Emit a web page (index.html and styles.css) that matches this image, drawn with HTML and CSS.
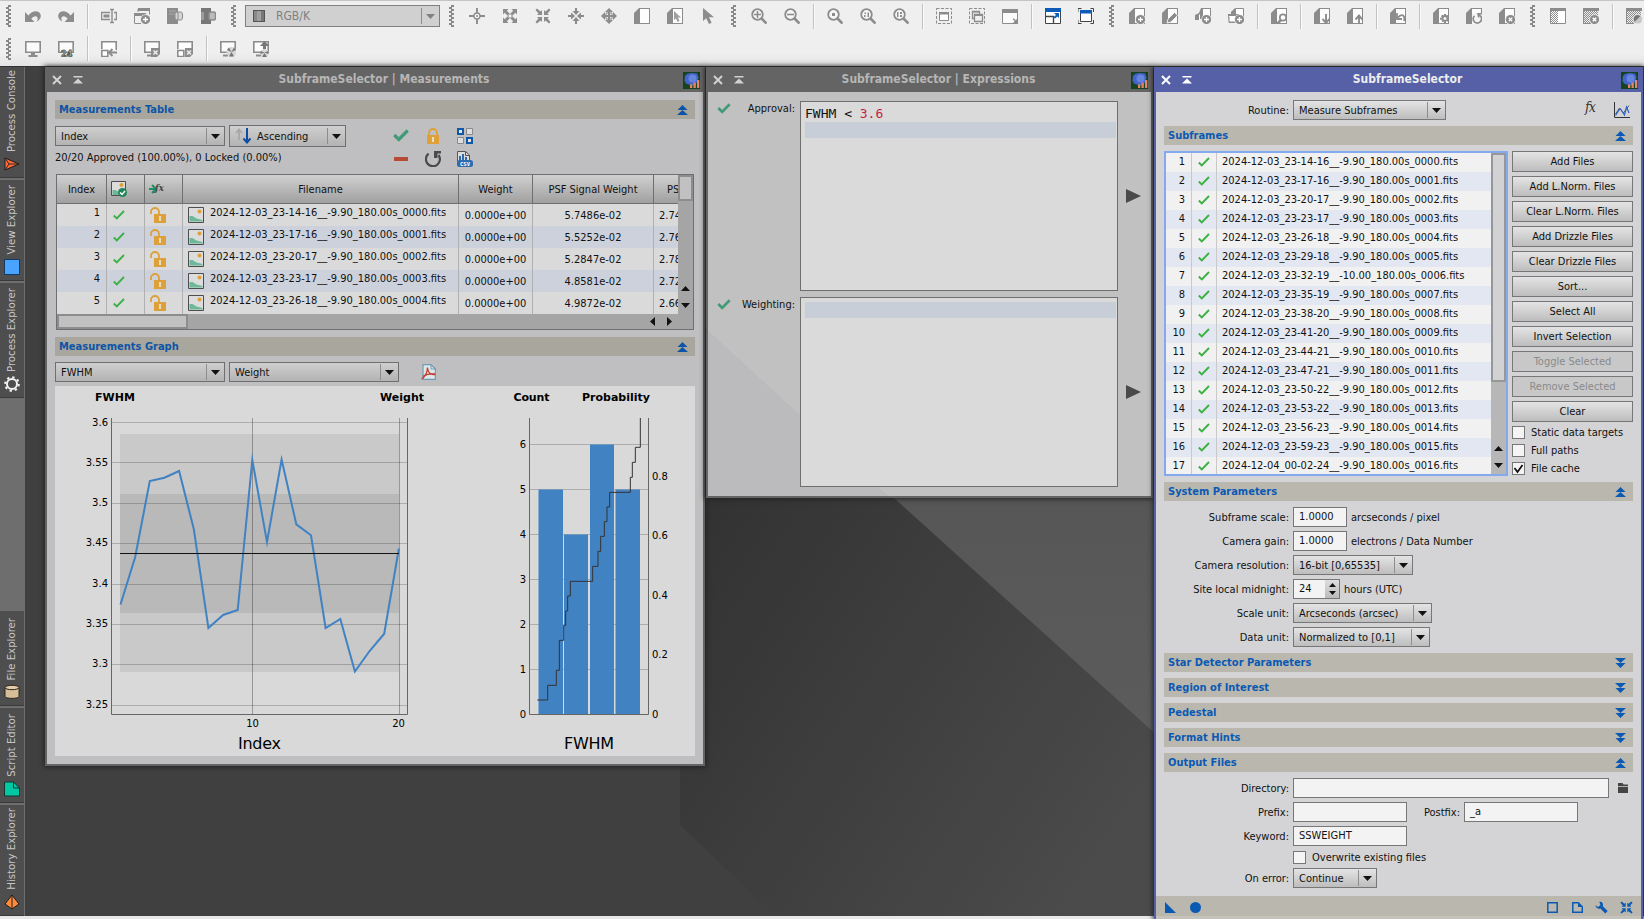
FILE: index.html
```html
<!DOCTYPE html>
<html lang="en">
<head>
    <meta charset="UTF-8">
    <title>SubframeSelector</title>
    <link rel="stylesheet" href="styles.css">
</head>
<body>
    <!-- Icon set -->
    <svg class="sprite" width="0" height="0">
        <defs>
            <pattern id="dots" width="2" height="2" patternUnits="userSpaceOnUse"><path d="M0 0h1v1H0zM1 1h1v1H1z" fill="#8c8c8c"/></pattern>
            <g id="doc"><path d="M6 .5h9.5v15H6z" fill="#fdfdfd"/><path d="M5 0h11v16H0V5zM6 1v14h9V1z" fill-rule="evenodd" fill="currentColor"/></g>
            <g id="badge"><circle cx="11.5" cy="11.5" r="5.3" fill="#efefef"/><circle cx="11.5" cy="11.5" r="4.6" fill="currentColor"/></g>
            <g id="lens"><circle cx="6.5" cy="6.5" r="5.3" fill="#f6f6f6" stroke="currentColor" stroke-width="1.8"/><path d="M10.5 10.5l5 5" stroke="currentColor" stroke-width="2.6"/></g>
            <g id="screen"><path d="M.8.8h14.4v10.4H.8z" fill="#fbfbfb" stroke="currentColor" stroke-width="1.6"/></g>
        </defs>
        <symbol id="undo" viewBox="0 0 16 16"><path d="M0 4v10h9.500l-3.200-3.200C8 8.500 11 7.500 12.300 9.300c.9 1.400.2 3-1.300 4.500C15 12.500 16.500 9 15.500 6.500 14 2.500 8 1.800 3.400 7.500z" fill="currentColor"/></symbol>
        <symbol id="redo" viewBox="0 0 16 16"><path d="M16 4v10H6.500l3.200-3.200C8 8.500 5 7.500 3.700 9.300c-.9 1.400-.2 3 1.300 4.500C1 12.500-.5 9 .5 6.500 2 2.500 8 1.800 12.600 7.500z" fill="currentColor"/></symbol>
        <symbol id="rename" viewBox="0 0 16 16"><path d="M9 4.500H.5v7H9M13 4.500h2.500v7H13M9 1.500h4M9 14.500h4M11 2v12" fill="none" stroke="currentColor" stroke-width="1.400"/><path d="M2.500 6.500h6v3h-6z" fill="currentColor"/></symbol>
        <symbol id="newwin" viewBox="0 0 16 16"><path d="M4.500 1.500h11v5M4 4V1M.5 15V6h11v2M.5 15.500H7" fill="none" stroke="currentColor"/><path d="M4 0h12v3H4zM0 5h12v3H0z" fill="currentColor"/><use href="#badge"/><path d="M11.500 9v5M9 11.500h5" stroke="#fff" stroke-width="1.300"/></symbol>
        <symbol id="cont1" viewBox="0 0 16 16"><rect width="11" height="16" fill="currentColor"/><path d="M2 3h7M2 6h6" stroke="#a9a9a9"/><rect x="8" y="4" width="7.500" height="8" rx="2" fill="#d5d5d5" stroke="currentColor"/><path d="M11 4v8" stroke="currentColor"/></symbol>
        <symbol id="cont2" viewBox="0 0 16 16"><rect x="1" width="10" height="16" fill="#777"/><path d="M1 4h3v8H1z" fill="#9b9b9b"/><rect x="9" y="4" width="6.500" height="8" rx="2" fill="#bbb" stroke="currentColor" stroke-width="1.500"/></symbol>
        <symbol id="center" viewBox="0 0 16 16"><path d="M8 0v5M8 11v5M0 8h5M11 8h5" fill="none" stroke="currentColor" stroke-width="1.900"/><circle cx="8" cy="8" r="3" fill="#f5f5f5" stroke="currentColor" stroke-width="1.300"/><path d="M8 7v2M7 8h2" stroke="currentColor"/></symbol>
        <symbol id="expand" viewBox="0 0 16 16"><path d="M1 1h5.500L4.800 2.700l3.200 3.300 3.200-3.300L9.500 1H15v5.500l-1.700-1.700L10 8l3.300 3.200L15 9.500V15H9.500l1.700-1.700L8 10l-3.200 3.300L6.500 15H1V9.500l1.700 1.700L6 8 2.700 4.800 1 6.500z" fill="currentColor"/><path d="M6.500 6.500h3v3h-3z" fill="#efefef"/></symbol>
        <symbol id="shrink" viewBox="0 0 16 16"><path d="M7 7H2l1.500-1.500L.5 2 2 .5l3.500 3L7 2zM9 7V2l1.500 1.500L14 .5 15.500 2l-3 3.500L14 7zM7 9v5l-1.500-1.500-3.500 3L.5 14l3-3.500L2 9zM9 9h5l-1.500 1.500 3 3.500-1.500 1.500-3.500-3L9 14z" fill="currentColor"/></symbol>
        <symbol id="inward" viewBox="0 0 16 16"><path d="M8 7L4.500 3H7V0h2v3h2.500zM8 9l3.500 4H9v3H7v-3H4.500zM7 8l-4 3.500V9H0V7h3V4.500zM9 8l4-3.500V7h3v2h-3v2.500z" fill="currentColor"/></symbol>
        <symbol id="pan" viewBox="0 0 16 16"><path d="M8 0l4 4H9v3h3V4l4 4-4 4V9H9v3h3l-4 4-4-4h3V9H4v3L0 8l4-4v3h3V4H4z" fill="currentColor"/><path d="M5 5h6v6H5z" fill="none" stroke="currentColor"/></symbol>
        <symbol id="page" viewBox="0 0 16 16"><use href="#doc"/></symbol>
        <symbol id="pagecursor" viewBox="0 0 16 16"><use href="#doc"/><path d="M7 3v9l2-1.500 1.500 3.500 2-1L11 9.500h3z" fill="#a0a0a0"/></symbol>
        <symbol id="cursor" viewBox="0 0 16 16"><path d="M3 0v13l3.200-2.700L9 16l2.600-1.300L9 9.300h5z" fill="currentColor"/></symbol>
        <symbol id="zoomin" viewBox="0 0 16 16"><use href="#lens"/><path d="M3 6.500h7M6.500 3v7" stroke="currentColor" stroke-width="1.600"/></symbol>
        <symbol id="zoomout" viewBox="0 0 16 16"><use href="#lens"/><path d="M3 6.500h7" stroke="currentColor" stroke-width="1.600"/></symbol>
        <symbol id="zoom1" viewBox="0 0 16 16"><use href="#lens"/><path d="M5 5h3v3H5z" fill="currentColor"/></symbol>
        <symbol id="zoom2" viewBox="0 0 16 16"><use href="#lens"/><path d="M4 7h1.500v2H4zM7.500 4.500H9V9H7.500zM4.500 4.500H6V6H4.500z" fill="currentColor"/></symbol>
        <symbol id="zoom3" viewBox="0 0 16 16"><use href="#lens"/><path d="M4 4h1.500v5H4zM7 4h2v2H7zM7 7h2v2H7z" fill="currentColor"/></symbol>
        <symbol id="fit1" viewBox="0 0 16 16"><path d="M.5.5h15v15H.5z" fill="none" stroke="currentColor" stroke-dasharray="3 1.500"/><path d="M3.500 4.500h9v8h-9z" fill="#fff" stroke="currentColor"/><path d="M3 4h10v2.500H3z" fill="currentColor"/></symbol>
        <symbol id="fit2" viewBox="0 0 16 16"><path d="M.5.5h15v15H.5z" fill="none" stroke="currentColor" stroke-dasharray="3 1.500"/><path d="M3 3.500h7.500V6M3.500 3v7.500H6M5.500 6.500h8v7h-8z" fill="none" stroke="currentColor" stroke-width="1.300"/><path d="M3 3h8v1.500H3zM5 6h9v2H5z" fill="currentColor"/></symbol>
        <symbol id="fit3" viewBox="0 0 16 16"><path d="M.5 1.500h15v14H.5z" fill="#fbfbfb" stroke="currentColor"/><path d="M0 1h16v4H0zM16 16v-6l-2.300 2.300-2-2-1 1 2 2L10 16z" fill="currentColor"/></symbol>
        <symbol id="winmax" viewBox="0 0 16 16"><path d="M.5.5h15v15H.5z" fill="#fff" stroke="#444"/><path d="M1 8.500h7.500V15" fill="none" stroke="#444" stroke-width="1.400"/><path d="M0 0h16v4H0zM14 5v5l-1.600-1.600L10 10.600 8.600 9.200 11 7 9 5z" fill="#0e5bb8"/></symbol>
        <symbol id="winfull" viewBox="0 0 16 16"><path d="M0 4V.5h3.500M12.500.5h3V4M0 12v3.500h3.500M12.500 15.500h3V12" fill="none" stroke="#444"/><path d="M2.500 2.500h11v11h-11z" fill="#fff" stroke="#444"/><path d="M2 2h12v3.500H2z" fill="#0e5bb8"/></symbol>
        <symbol id="docadd" viewBox="0 0 16 16"><use href="#doc"/><use href="#badge"/><path d="M11.500 9v5M9 11.500h5" stroke="#fff" stroke-width="1.300"/></symbol>
        <symbol id="docedit" viewBox="0 0 16 16"><use href="#doc"/><path d="M5 15l1-4 6.500-6.500 3 3L9 14z" fill="currentColor" stroke="#efefef"/></symbol>
        <symbol id="docadd2" viewBox="0 0 16 16"><path d="M6 0h10v11H4v1H0V7l4-2z" fill="currentColor"/><path d="M8 1h7v9H8zM4 7l1-1v6H4z" fill="#fff"/><use href="#badge"/><path d="M11.500 9v5M9 11.500h5" stroke="#fff" stroke-width="1.300"/></symbol>
        <symbol id="docadd3" viewBox="0 0 16 16"><path d="M7.500.5h8v9h-8z" fill="#fff" stroke="currentColor"/><path d="M7 0v6h4v2H0V6h3V4zM.5 8v6.500H8" fill="currentColor"/><path d="M1.500 8h6v5.500h-6z" fill="#fff"/><path d="M0 7h1v8h8v-1H1z" fill="currentColor"/><use href="#badge"/><path d="M11.500 9v5M9 11.500h5" stroke="#fff" stroke-width="1.300"/></symbol>
        <symbol id="docfind" viewBox="0 0 16 16"><use href="#doc"/><path d="M6 16l4-4" stroke="currentColor" stroke-width="2.500"/><circle cx="12" cy="9.500" r="3.200" fill="#fff" stroke="currentColor" stroke-width="1.700"/></symbol>
        <symbol id="docdown" viewBox="0 0 16 16"><use href="#doc"/><path d="M12 6v8M8.500 11l3.500 4 3.500-4" fill="none" stroke="currentColor" stroke-width="1.900"/></symbol>
        <symbol id="docup" viewBox="0 0 16 16"><use href="#doc"/><path d="M12 16V8M8.500 11.500L12 7.500l3.500 4" fill="none" stroke="currentColor" stroke-width="1.900"/></symbol>
        <symbol id="docundo" viewBox="0 0 16 16"><use href="#doc"/><path d="M7 5v6h5M7.500 10c4-5 8-3 6.500 3" fill="none" stroke="currentColor" stroke-width="1.800"/></symbol>
        <symbol id="docgear" viewBox="0 0 16 16"><use href="#doc"/><path d="M11 6h2v1.500l1.200-.8 1.300 1.300-.8 1.200H16v2h-1.300l.8 1.300-1.300 1.300-1.200-.8V15h-2v-1.500l-1.200.8-1.300-1.300.8-1.300H7v-2h1.800L8 8l1.300-1.300 1.700.8z" fill="currentColor"/><circle cx="12" cy="10.500" r="1.500" fill="#f5f5f5"/></symbol>
        <symbol id="docreload" viewBox="0 0 16 16"><use href="#doc"/><path d="M6 5h10v11H6z" fill="#f5f5f5"/><path d="M8.500 7.800a4.200 4.200 0 1 0 4.500-.8" fill="none" stroke="currentColor" stroke-width="1.700"/><path d="M11 5h5v1.500h-2.500v3H12z" fill="currentColor"/></symbol>
        <symbol id="docdel" viewBox="0 0 16 16"><use href="#doc"/><use href="#badge"/><path d="M9.800 9.800l3.400 3.400M13.200 9.800l-3.400 3.400" stroke="#fff" stroke-width="1.300"/></symbol>
        <symbol id="mask" viewBox="0 0 16 16"><path d="M0 .5h16v15H0z" fill="#fff"/><path d="M1 2h7v13H1z" fill="url(#dots)"/><path d="M.5.500h15v15H.5z" fill="none" stroke="currentColor"/><path d="M0 0h16v3H0z" fill="currentColor"/></symbol>
        <symbol id="maskdel" viewBox="0 0 16 16"><path d="M1 2h14v13H1z" fill="url(#dots)"/><path d="M0 0h16v3H0zM0 0h1v16H0zM0 15h8v1H0z" fill="currentColor"/><use href="#badge"/><path d="M9.800 9.800l3.400 3.400M13.200 9.800l-3.400 3.400" stroke="#fff" stroke-width="1.500"/></symbol>
        <symbol id="maskinv" viewBox="0 0 16 16"><path d="M1 2h14v13H1z" fill="url(#dots)"/><path d="M0 0h16v3H0zM0 0h1v16H0zM0 15h8v1H0z" fill="currentColor"/><circle cx="11.500" cy="11" r="4.500" fill="#777" stroke="#efefef"/><path d="M8.500 14l6-6a4 4 0 0 1-6 6z" fill="#c9c9c9"/></symbol>
        <symbol id="mon" viewBox="0 0 16 16"><use href="#screen"/><path d="M6 12h4v2h2.500v2h-9v-2H6z" fill="currentColor"/></symbol>
        <symbol id="mon24" viewBox="0 0 16 16"><use href="#screen"/><text x="3" y="15.500" class="tiny24">24</text></symbol>
        <symbol id="monleft" viewBox="0 0 16 16"><path d="M.8 8V.8h14.400V9M.8 9.500h6v6h-6z" fill="#fff" stroke="currentColor" stroke-width="1.600"/><path d="M16 11.500H9M11.500 8L8 11.500l3.500 3.500" fill="none" stroke="currentColor" stroke-width="1.900"/></symbol>
        <symbol id="mondel" viewBox="0 0 16 16"><use href="#screen"/><path d="M3 13.500h5v2H3z" fill="currentColor"/><path d="M7 7h9v6l-3 3H7z" fill="currentColor"/><path d="M9.500 9.500l4 4M13.500 9.500l-4 4" stroke="#efefef" stroke-width="1.500"/></symbol>
        <symbol id="mondel2" viewBox="0 0 16 16"><path d="M.8 8V.8h14.400V9M.8 9.500h6v6h-6z" fill="#fff" stroke="currentColor" stroke-width="1.600"/><path d="M8 7h8v6l-3 3H8z" fill="currentColor"/><path d="M10 9.500l4 4M14 9.500l-4 4" stroke="#efefef" stroke-width="1.500"/></symbol>
        <symbol id="monrad" viewBox="0 0 16 16"><use href="#screen"/><path d="M3 13.500h5v2H3z" fill="currentColor"/><circle cx="11.500" cy="11" r="5" fill="#d8d8d8"/><path d="M11.500 11L7 9l2-2.500zM11.500 11L16 9l-2-2.500zM11.500 11L9 15.500h5z" fill="#777"/></symbol>
        <symbol id="monup" viewBox="0 0 16 16"><use href="#screen"/><path d="M3 13.500h5v2H3z" fill="currentColor"/><circle cx="11.500" cy="12" r="4" fill="#d8d8d8"/><path d="M11.500 11.500L7.500 10v3zM11.500 11.500l4-1.500v3zM11.500 12L9 16h5z" fill="#777"/><path d="M11.500 0L16 5h-3v3h-3V5H7z" fill="#777"/></symbol>

        <symbol id="down" viewBox="0 0 9 5"><path d="M0 0h9L4.500 5z" fill="currentColor"/></symbol>
        <symbol id="chevup" viewBox="0 0 11 10"><path d="M5.500 0L10.500 5H.5zM5.500 5L11 10H0z" fill="currentColor"/></symbol>
        <symbol id="chevdown" viewBox="0 0 11 10"><path d="M0 0h11L5.500 5zM.5 5h10L5.500 10z" fill="currentColor"/></symbol>
        <symbol id="close" viewBox="0 0 10 10"><path d="M1 1l8 8M9 1L1 9" stroke="currentColor" stroke-width="2"/></symbol>
        <symbol id="shade" viewBox="0 0 10 8"><path d="M.5 0h9v1.500h-9zM5 2.500L10 7.500H0z" fill="currentColor"/></symbol>
        <symbol id="app" viewBox="0 0 17 17"><path d="M0 0h17v17H0z" fill="#17421f"/><path d="M2 4l2-2 4-1 6 .500 1.500 3.500-1 5-3.500 3.500-4-.5-4-1.500-1.500-3z" fill="#4464cc"/><circle cx="9.500" cy="6.500" r="4" fill="#6385dc"/><path d="M7 12.500h2.300V16H7zM10.500 10.500h2.300V16h-2.300zM14 8h2.300v8H14z" fill="#e2876a"/></symbol>
        <symbol id="tick" viewBox="0 0 12 10"><path d="M.8 5.500l3 3L11 1" fill="none" stroke="#3cb043" stroke-width="1.900"/></symbol>
        <symbol id="bigtick" viewBox="0 0 16 13"><path d="M1.300 6l4.500 4.500L14.700 1.500" fill="none" stroke="#429a77" stroke-width="3.200"/></symbol>
        <symbol id="lock" viewBox="0 0 12 16"><path d="M2 7V5a4 4 0 0 1 8 0v2" fill="none" stroke="#dea038" stroke-width="1.800"/><path d="M0 7h12v9H0z" fill="#dea038"/><path d="M5 9h2v5H5z" fill="#e8dcc4"/></symbol>
        <symbol id="unlock" viewBox="0 0 16 16"><path d="M1 7V5a4 4 0 0 1 8 0v2" fill="none" stroke="#dea038" stroke-width="1.800"/><path d="M4 7h12v9H4z" fill="#dea038"/><path d="M9 9h2v5H9z" fill="#e8dcc4"/></symbol>
        <symbol id="grid" viewBox="0 0 16 16"><path d="M1 1h5v5H1zM10 10h5v5h-5z" fill="#e4e4e4" stroke="#1159a8" stroke-width="2"/><path d="M9.500.5h6v6h-6zM.5 9.500h6v6h-6z" fill="#ddd" stroke="#8a8a8a"/></symbol>
        <symbol id="reload" viewBox="0 0 16 16"><path d="M3.600 2.700A7 7 0 1 0 13.500 4" fill="none" stroke="#4a4a4a" stroke-width="2.200"/><path d="M9 0h7v2.500h-3.500V7H9z" fill="#4a4a4a"/></symbol>
        <symbol id="csv" viewBox="0 0 16 16"><path d="M.5 10V.5h8L12.500 4v5" fill="#dcdcdc" stroke="#555"/><path d="M2 5h2v4H2zM5 3h2v6H5zM8 6h2v3H8z" fill="#2f6cae"/><path d="M8.500.5v4h4" fill="none" stroke="#555"/><rect y="9" width="16" height="7" rx="2.500" fill="#2f6cae"/><text x="8" y="14.600" class="tinycsv">CSV</text></symbol>
        <symbol id="pdf" viewBox="0 0 16 16"><path d="M2 .6h8L14.400 5v10.400H2z" fill="#dfe6ea" stroke="#6e9cb3" stroke-width="1.200"/><path d="M10 .600V5h4.400" fill="none" stroke="#6e9cb3"/><path d="M.5 15C4 13 6.500 8 6.500 3.500M6.500 4c.5 4 3 7 7.500 6.500M2 12.500c3-2.500 7-3 12-2.500" fill="none" stroke="#c0392b" stroke-width="1.300"/></symbol>
        <symbol id="image" viewBox="0 0 16 16"><path d="M.5.5h15v15H.5z" fill="#dcdcdc" stroke="#4d4d4d"/><path d="M1.500 9h3l4 2.500 6 1.500v1.500h-13z" fill="#6cb899"/><circle cx="11.500" cy="4.500" r="2" fill="#dea038"/></symbol>
        <symbol id="imageok" viewBox="0 0 16 16"><path d="M.5.500h14v14H.5z" fill="#dcdcdc" stroke="#4d4d4d"/><path d="M1.500 9h3l3 2v3h-6z" fill="#6cb899"/><circle cx="10.500" cy="4" r="2" fill="#dea038"/><circle cx="11.500" cy="11.500" r="4.500" fill="#1f8757"/><path d="M9 11.500l2 2 3-3.500" fill="none" stroke="#fff" stroke-width="1.500"/></symbol>
        <symbol id="arrowfx" viewBox="0 0 16 16"><path d="M0 8h6M3 4l4 4-4 4" fill="none" stroke="#1f9066" stroke-width="2"/><text x="6" y="10" class="tinyfx">&#402;x</text></symbol>
        <symbol id="graph" viewBox="0 0 16 16"><path d="M.5 0v15.500H16" fill="none" stroke="#333"/><path d="M1.500 12l4-6 4 5 5.500-7.500" fill="none" stroke="#555"/><path d="M1.500 13.500L5 8l1.500-1 4 6 2-8 2.500 6" fill="none" stroke="#2d63c8" stroke-width="1.200"/></symbol>
        <symbol id="play" viewBox="0 0 15 14"><path d="M0 0l15 7L0 14z" fill="#4a4a4a"/></symbol>
        <symbol id="updown" viewBox="0 0 16 16"><path d="M4 12V3M1 5l3-3.500L7 5" fill="none" stroke="#a8a8a8" stroke-width="1.800"/><path d="M12 0v13M8.500 10.500L12 14.500l3.500-4" fill="none" stroke="#0c4ea2" stroke-width="2"/></symbol>
        <symbol id="folder" viewBox="0 0 10 10"><path d="M0 0h4.500l1 1.500H10V3H0zM0 3.700h10V10H0z" fill="#444"/></symbol>
        <symbol id="console" viewBox="0 0 16 16"><path d="M1 2l14 6L1 14z" fill="#ff6a3a" stroke="#1e1e1e"/><path d="M1 2l4 6-4 6M5 8h10" fill="none" stroke="#1e1e1e" stroke-width=".9"/></symbol>
        <symbol id="view" viewBox="0 0 16 16"><path d="M.5.5h15v15H.5z" fill="#4aa3ff" stroke="#123a63"/></symbol>
        <symbol id="gear" viewBox="0 0 16 16"><circle cx="8" cy="8" r="5" fill="none" stroke="#f2f2f2" stroke-width="2"/><circle cx="8" cy="8" r="6.800" fill="none" stroke="#f2f2f2" stroke-width="2" stroke-dasharray="2.400 2.940"/></symbol>
        <symbol id="disk" viewBox="0 0 16 16"><path d="M1 3.500v9c0 2.500 14 2.500 14 0v-9" fill="#d6bf98" stroke="#2b2620"/><ellipse cx="8" cy="3.500" rx="7" ry="2.200" fill="#e3cda8" stroke="#2b2620"/></symbol>
        <symbol id="script" viewBox="0 0 16 16"><path d="M.5 1h9L15.500 7v8H.5z" fill="#00c8a5" stroke="#12352e"/><path d="M9.500 1v6h6" fill="none" stroke="#12352e"/></symbol>
        <symbol id="history" viewBox="0 0 16 16"><path d="M8 1l7 9-7 5-7-5z" fill="#ff8a3c" stroke="#1e1e1e"/><path d="M8 1v14" stroke="#1e1e1e"/></symbol>
        <symbol id="tri" viewBox="0 0 11 11"><path d="M0 0l11 11H0z" fill="currentColor"/></symbol>
        <symbol id="dot" viewBox="0 0 11 11"><circle cx="5.500" cy="5.500" r="5.500" fill="currentColor"/></symbol>
        <symbol id="square" viewBox="0 0 11 11"><path d="M.8.800h9.400v9.400H.8z" fill="none" stroke="currentColor" stroke-width="1.500"/></symbol>
        <symbol id="sheet" viewBox="0 0 11 11"><path d="M.8.800h5.500l4 4v5.400H.8z" fill="none" stroke="currentColor" stroke-width="1.500"/><path d="M6 1v4h4z" fill="currentColor"/></symbol>
        <symbol id="wrench" viewBox="0 0 12 12"><path d="M4 .8C6.500.5 8 2.500 7.200 4.800l4.500 4.500-2.200 2.200L5 7C3 7.800.8 6.500.3 4l2.500 1.500L5 3.800z" fill="currentColor"/></symbol>
    </svg>

    <div class="toolbars">
        <div class="toolbar" id="toolbar-main"></div>
        <div class="toolbar" id="toolbar-screen"></div>
    </div>

    <div class="desktop">
        <svg class="wallpaper" width="1644" height="849" viewBox="0 67 1644 849">
            <defs>
                <linearGradient id="wp1" gradientUnits="userSpaceOnUse" x1="700" y1="500" x2="1150" y2="800"><stop offset="0" stop-color="#323232"/><stop offset="1" stop-color="#4b4b4b"/></linearGradient>
                <linearGradient id="wp2" x1="0" y1="0" x2="0" y2="1"><stop offset="0" stop-color="#4c4c4c"/><stop offset="1" stop-color="#5c5c5c"/></linearGradient>
            </defs>
            <rect y="67" width="1644" height="849" fill="#404040"/>
            <path d="M680 67h964v849H776l-96-91z" fill="url(#wp1)"/>
            <path d="M700 323L1160 738V67H700z" fill="url(#wp2)"/>
        </svg>

        <div class="dock">
            <div class="tab t1"><span>Process Console</span><svg class="i16"><use href="#console"/></svg></div>
            <div class="tab t2"><span>View Explorer</span><svg class="i16"><use href="#view"/></svg></div>
            <div class="tab t3"><span>Process Explorer</span><svg class="i16"><use href="#gear"/></svg></div>
            <div class="dock-space"></div>
            <div class="tab t4"><span>File Explorer</span><svg class="i16"><use href="#disk"/></svg></div>
            <div class="tab t5"><span>Script Editor</span><svg class="i16"><use href="#script"/></svg></div>
            <div class="tab t6"><span>History Explorer</span><svg class="i16"><use href="#history"/></svg></div>
        </div>

        <!-- Measurements window -->
        <div class="window measurements">
            <div class="titlebar">
                <svg class="close"><use href="#close"/></svg><svg class="shade"><use href="#shade"/></svg>
                <b>SubframeSelector | Measurements</b><svg class="app"><use href="#app"/></svg>
            </div>
            <div class="content">
                <div class="section"><span>Measurements Table</span><svg class="chev"><use href="#chevup"/></svg></div>
                <div class="table-tools">
                    <div class="sorting">
                        <div class="line">
                            <div class="combo w170"><span>Index</span><i><svg><use href="#down"/></svg></i></div>
                            <div class="combo order"><svg class="i16"><use href="#updown"/></svg><span>Ascending</span><i><svg><use href="#down"/></svg></i></div>
                        </div>
                        <div class="summary">20/20 Approved (100.00%), 0 Locked (0.00%)</div>
                    </div>
                    <div class="actions">
                        <svg class="tick16"><use href="#bigtick"/></svg><svg class="lock16"><use href="#lock"/></svg><svg class="i16"><use href="#grid"/></svg>
                        <em></em><svg class="i16"><use href="#reload"/></svg><svg class="i16"><use href="#csv"/></svg>
                    </div>
                </div>
                <div class="table">
                    <div class="tr head">
                        <div>Index</div><div class="l"><svg class="i16"><use href="#imageok"/></svg></div><div class="l"><svg class="i16"><use href="#arrowfx"/></svg></div>
                        <div>Filename</div><div>Weight</div><div>PSF Signal Weight</div><div class="cut last">PS</div>
                    </div>
                    <div id="measure-rows"></div>
                    <div class="vscroll"><b></b><svg class="up"><use href="#down"/></svg><svg><use href="#down"/></svg></div>
                    <div class="hscroll"><b></b><svg class="left"><use href="#down"/></svg><svg class="right"><use href="#down"/></svg></div>
                </div>
                <div class="section"><span>Measurements Graph</span><svg class="chev"><use href="#chevup"/></svg></div>
                <div class="line graph-tools">
                    <div class="combo w170"><span>FWHM</span><i><svg><use href="#down"/></svg></i></div>
                    <div class="combo w170"><span>Weight</span><i><svg><use href="#down"/></svg></i></div>
                    <svg class="i16"><use href="#pdf"/></svg>
                </div>
                <svg class="chart" width="640" height="370" viewBox="55 386 640 370">
                    <path d="M120 434h279v238H120z" fill="#c9c9c9"/>
                    <path d="M120 494h279v119H120z" fill="#b9b9b9"/>
                    <path d="M112 422.500h296M112 462.500h296M112 503.500h296M112 543.500h296M112 584.500h296M112 624.500h296M112 664.500h296M112 705.500h296" class="gl"/>
                    <path d="M252.500 418v296M399.500 418v296" class="gl dark"/>
                    <path d="M111.500 418v296.500h296V418" class="axis"/>
                    <polyline id="fwhm-line" class="series"/>
                    <path d="M120 553.500h279" stroke="#111"/>
                    <g id="fwhm-labels"></g>
                    <text x="252.500" y="727" class="mid">10</text><text x="398.500" y="727" class="mid">20</text>
                    <text x="259.500" y="748.500" class="name" textLength="43">Index</text>
                    <text x="115" y="401" class="cap" textLength="40">FWHM</text>
                    <text x="402" y="401" class="cap" textLength="44">Weight</text>

                    <path d="M530 444.500h119M530 489.500h119M530 534.500h119M530 579.500h119M530 624.500h119M530 669.500h119" class="gl"/>
                    <path d="M538.500 489.500H563V715h-24.500zM564 534.500h24V715h-24zM590 444.500h24V715h-24zM615.500 489.500H640V715h-24.500z" fill="#4182c3"/>
                    <path d="M529.500 418v296.500h119V418" class="axis"/>
                    <path transform="translate(430 330) scale(.33333)" class="steps" d="M322 1110H353V1066H379V1021H388V931H401V886H407V843H413V798H421V754H488V709H504V664H512V619H523V575H531V531H539V487H601V442H607V397H616V352H631V264"/>
                    <g id="hist-labels"></g>
                    <text x="589" y="748.500" class="name" textLength="50">FWHM</text>
                    <text x="531.500" y="401" class="cap" textLength="36">Count</text>
                    <text x="616" y="401" class="cap" textLength="68">Probability</text>
                </svg>
            </div>
        </div>

        <!-- Expressions window -->
        <div class="window expressions">
            <div class="titlebar">
                <svg class="close"><use href="#close"/></svg><svg class="shade"><use href="#shade"/></svg>
                <b>SubframeSelector | Expressions</b><svg class="app"><use href="#app"/></svg>
            </div>
            <div class="content">
                <div class="expr"><svg class="tick14"><use href="#bigtick"/></svg><label>Approval:</label><div class="code"><p>FWHM &lt; <q>3.6</q></p><p class="cur"></p></div><svg class="play"><use href="#play"/></svg></div>
                <div class="expr"><svg class="tick14"><use href="#bigtick"/></svg><label>Weighting:</label><div class="code"><p class="cur"></p></div><svg class="play"><use href="#play"/></svg></div>
            </div>
        </div>

        <!-- Main process window -->
        <div class="window selector">
            <div class="titlebar">
                <svg class="close"><use href="#close"/></svg><svg class="shade"><use href="#shade"/></svg>
                <b>SubframeSelector</b><svg class="app"><use href="#app"/></svg>
            </div>
            <div class="content">
                <div class="row routine"><label>Routine:</label><div class="combo w153"><span>Measure Subframes</span><i><svg><use href="#down"/></svg></i></div><span class="fx">fx</span><svg class="i16"><use href="#graph"/></svg></div>
                <div class="section"><span>Subframes</span><svg class="chev"><use href="#chevup"/></svg></div>
                <div class="subframes">
                    <div class="list">
                        <div id="subframe-rows"></div>
                        <div class="lscroll"><b></b><svg class="up"><use href="#down"/></svg><svg><use href="#down"/></svg></div>
                    </div>
                    <div class="buttons">
                        <button>Add Files</button>
                        <button>Add L.Norm. Files</button>
                        <button>Clear L.Norm. Files</button>
                        <button>Add Drizzle Files</button>
                        <button>Clear Drizzle Files</button>
                        <button>Sort...</button>
                        <button>Select All</button>
                        <button>Invert Selection</button>
                        <button disabled>Toggle Selected</button>
                        <button disabled>Remove Selected</button>
                        <button>Clear</button>
                        <div class="check"><i></i>Static data targets</div>
                        <div class="check"><i></i>Full paths</div>
                        <div class="check"><i><svg viewBox="0 0 11 11"><path d="M1.500 5l3 4L9.500 2" fill="none" stroke="#111" stroke-width="1.800"/></svg></i>File cache</div>
                    </div>
                </div>
                <div class="section"><span>System Parameters</span><svg class="chev"><use href="#chevup"/></svg></div>
                <div class="form">
                    <div class="row"><label>Subframe scale:</label><div class="edit w54">1.0000</div><span>arcseconds / pixel</span></div>
                    <div class="row"><label>Camera gain:</label><div class="edit w54">1.0000</div><span>electrons / Data Number</span></div>
                    <div class="row"><label>Camera resolution:</label><div class="combo w120"><span>16-bit [0,65535]</span><i><svg><use href="#down"/></svg></i></div></div>
                    <div class="row"><label>Site local midnight:</label><div class="edit spin">24<i><svg class="up"><use href="#down"/></svg><svg><use href="#down"/></svg></i></div><span>hours (UTC)</span></div>
                    <div class="row"><label>Scale unit:</label><div class="combo w139"><span>Arcseconds (arcsec)</span><i><svg><use href="#down"/></svg></i></div></div>
                    <div class="row"><label>Data unit:</label><div class="combo w137"><span>Normalized to [0,1]</span><i><svg><use href="#down"/></svg></i></div></div>
                </div>
                <div class="section"><span>Star Detector Parameters</span><svg class="chev"><use href="#chevdown"/></svg></div>
                <div class="section"><span>Region of Interest</span><svg class="chev"><use href="#chevdown"/></svg></div>
                <div class="section"><span>Pedestal</span><svg class="chev"><use href="#chevdown"/></svg></div>
                <div class="section"><span>Format Hints</span><svg class="chev"><use href="#chevdown"/></svg></div>
                <div class="section"><span>Output Files</span><svg class="chev"><use href="#chevup"/></svg></div>
                <div class="form output">
                    <div class="row"><label>Directory:</label><div class="edit w316"></div><svg class="folder"><use href="#folder"/></svg></div>
                    <div class="row"><label>Prefix:</label><div class="edit w114"></div><label class="postfix">Postfix:</label><div class="edit w114">_a</div></div>
                    <div class="row"><label>Keyword:</label><div class="edit w114">SSWEIGHT</div></div>
                    <div class="row overwrite"><label></label><div class="check"><i></i>Overwrite existing files</div></div>
                    <div class="row"><label>On error:</label><div class="combo w84"><span>Continue</span><i><svg><use href="#down"/></svg></i></div></div>
                </div>
            </div>
            <div class="control">
                <svg><use href="#tri"/></svg><svg><use href="#dot"/></svg><span></span>
                <svg><use href="#square"/></svg><svg><use href="#sheet"/></svg><svg class="c12"><use href="#wrench"/></svg><svg class="c12"><use href="#shrink"/></svg>
            </div>
        </div>
    </div>
    <script src="script.js"></script>
</body>
</html>
```

FILE: script.js
```js
const mainTools = 'grip0 undo redo | rename newwin cont1 cont2 grip channel grip center expand shrink inward pan page pagecursor cursor grip zoomin zoomout | zoom1 zoom2 zoom3 | fit1 fit2 fit3 | winmax winfull grip docadd docedit docadd2 docadd3 | docfind | docdown docup | docundo | docgear docreload docdel grip mask maskdel | maskinv';
const screenTools = 'grip0 mon mon24 | monleft | mondel mondel2 | monrad monup';

const files = [
    '03_23-14-16__-9.90', '03_23-17-16__-9.90', '03_23-20-17__-9.90', '03_23-23-17__-9.90',
    '03_23-26-18__-9.90', '03_23-29-18__-9.90', '03_23-32-19__-10.00', '03_23-35-19__-9.90',
    '03_23-38-20__-9.90', '03_23-41-20__-9.90', '03_23-44-21__-9.90', '03_23-47-21__-9.90',
    '03_23-50-22__-9.90', '03_23-53-22__-9.90', '03_23-56-23__-9.90', '03_23-59-23__-9.90',
    '04_00-02-24__-9.90'
].map((f, i) => `2024-12-${f}_180.00s_00${String(i).padStart(2, '0')}.fits`);

const psf = [['5.7486e-02', '2.74'], ['5.5252e-02', '2.76'], ['5.2847e-02', '2.78'], ['4.8581e-02', '2.72'], ['4.9872e-02', '2.66']];

const icon = (name, cls = 'i16') => `<svg class="${cls}"><use href="#${name}"/></svg>`;

// Toolbars
function fillToolbar(id, tools) {
    document.getElementById(id).innerHTML = tools.split(' ').map(t => {
        if (t === '|') return '<span class="sep"></span>';
        if (t === 'grip0') return '<span class="grip first"></span>';
        if (t === 'grip') return '<span class="grip"></span>';
        if (t === 'channel') return '<div class="combo channel"><em></em><span>RGB/K</span><i><svg><use href="#down"/></svg></i></div>';
        return `<span class="tool">${icon(t)}</span>`;
    }).join('');
}
fillToolbar('toolbar-main', mainTools);
fillToolbar('toolbar-screen', screenTools);

// Measurements table
document.getElementById('measure-rows').innerHTML = psf.map((p, i) => `
    <div class="tr">
        <div class="num">${i + 1}</div><div class="l">${icon('tick', 'tick')}</div><div class="l">${icon('unlock')}</div>
        <div class="file">${icon('image')}<span>${files[i]}</span></div><div>0.0000e+00</div><div>${p[0]}</div><div class="cut">${p[1]}</div>
    </div>`).join('');

// Subframes list
document.getElementById('subframe-rows').innerHTML = files.map((f, i) => `
    <div class="item"><div>${i + 1}</div><div class="t">${icon('tick', 'tick')}</div><div class="n">${f}</div></div>`).join('');

// Graph
const ys = [604.5, 557, 481, 477.7, 471, 529, 628, 615, 610, 460, 542, 459.5, 524.3, 535.3, 628, 619, 671.5, 651, 633.7, 548.5];
document.getElementById('fwhm-line').setAttribute('points', ys.map((y, i) => `${(120.5 + i * 14.65).toFixed(1)},${y}`).join(' '));

const text = (x, y, cls, s) => `<text x="${x}" y="${y}" class="${cls}">${s}</text>`;
document.getElementById('fwhm-labels').innerHTML =
    ['3.6', '3.55', '3.5', '3.45', '3.4', '3.35', '3.3', '3.25'].map((s, i) => text(108, 425.5 + i * 40.3, 'end', s)).join('');
document.getElementById('hist-labels').innerHTML =
    [0, 1, 2, 3, 4, 5, 6].map(n => text(526, 717.5 - n * 45, 'end', n)).join('') +
    ['0', '0.2', '0.4', '0.6', '0.8'].map((s, i) => text(652, 717.5 - i * 59.5, '', s)).join('');
```

FILE: styles.css
```css
* {
    box-sizing: border-box;
}
body {
    margin: 0;
    width: 1644px;
    height: 919px;
    overflow: hidden;
    background: #e8e8e8;
    font-family: "DejaVu Sans Condensed", "DejaVu Sans", sans-serif;
    font-stretch: condensed;
    font-size: 11px;
    color: #111;
    display: flex;
    flex-direction: column;
}
svg {
    display: block;
    flex: none;
}
.sprite {
    position: absolute;
}
.i16 {
    width: 16px;
    height: 16px;
}

/* Toolbars */
.toolbars {
    height: 67px;
    flex: none;
    background: linear-gradient(#efefef 80%, #e4e4e4);
    border-top: 1px solid #c4c4c4;
    border-bottom: 1px solid #333;
    color: #8c8c8c;
}
.toolbar {
    display: flex;
    align-items: center;
    height: 30px;
    overflow: hidden;
}
.toolbar + .toolbar {
    height: 35px;
}
.tool {
    width: 33px;
    flex: none;
    display: flex;
    justify-content: center;
}
.sep {
    width: 10px;
    flex: none;
    height: 25px;
    background: linear-gradient(90deg, transparent 4px, #c2c2c2 4px, #c2c2c2 5px, #fafafa 5px, #fafafa 6px, transparent 6px);
}
.grip {
    width: 18px;
    flex: none;
    height: 22px;
    background: conic-gradient(#888 25%, transparent 0 50%, #888 0 75%, transparent 0);
    background-repeat: repeat-y;
    background-size: 5px 4px;
    background-position: 6px 0;
}
.grip.first {
    width: 16.5px;
}
.tiny24 {
    font: bold 9px "DejaVu Sans Condensed", sans-serif;
    fill: #ddd;
    stroke: #555;
    stroke-width: .8px;
}
.tinycsv {
    font: bold 5.5px "DejaVu Sans Mono", monospace;
    fill: #fff;
    text-anchor: middle;
}
.tinyfx {
    font: italic bold 8.5px "DejaVu Serif", serif;
    fill: #444;
}

/* Controls */
.combo {
    display: flex;
    align-items: center;
    height: 20px;
    border: 1px solid #6f6f6f;
    background: linear-gradient(#cfcfcf, #b3b3b3);
    padding-left: 5px;
    white-space: nowrap;
}
.combo > span {
    flex: 1;
}
.combo > i {
    width: 18px;
    height: 16px;
    border-left: 1px solid #8d8d8d;
    display: flex;
    align-items: center;
    justify-content: center;
}
.combo > i svg {
    width: 9px;
    height: 5px;
}
.combo.channel {
    width: 195px;
    height: 22px;
    flex: none;
    margin: 0 2.5px;
    border-color: #808080;
    background: #d0d0d0;
    font-size: 12px;
    color: #808080;
    padding-left: 7px;
}
.channel em {
    width: 12px;
    height: 12px;
    margin-right: 11px;
    border: 1px solid #555;
    background: linear-gradient(90deg, #8a8a8a 33%, #a0a0a0 33% 66%, #777 66%);
}
.line {
    display: flex;
    gap: 4px;
    align-items: center;
}
.w170 { width: 170px; }
.w153 { width: 153px; }
.w120 { width: 120px; }
.w139 { width: 139px; }
.w137 { width: 137px; }
.w84 { width: 84px; }
.w54 { width: 54px; }
.w114 { width: 114px; }
.w316 { width: 316px; }
.section {
    height: 19px;
    display: flex;
    align-items: center;
    justify-content: space-between;
    background: #a9a69e;
    color: #0c55a6;
    font-weight: bold;
    padding: 0 7px 0 4px;
}
.chev {
    width: 11px;
    height: 10px;
}
.tick {
    width: 12px;
    height: 10px;
}
.up {
    transform: rotate(180deg);
}
.left {
    transform: rotate(90deg);
}
.right {
    transform: rotate(-90deg);
}

/* Desktop */
.desktop {
    position: relative;
    height: 849px;
    flex: none;
}
.wallpaper {
    position: absolute;
    left: 0;
    top: 0;
}
.dock {
    position: absolute;
    left: 0;
    top: 0;
    width: 25px;
    height: 849px;
    background: #6e6e6e;
    display: flex;
    flex-direction: column;
}
.tab {
    width: 24px;
    background: #4e4e4e;
    border-bottom: 1px solid #3a3a3a;
    display: flex;
    flex-direction: column;
    align-items: center;
    justify-content: flex-end;
    gap: 4px;
    padding: 0 1px 5px 0;
    margin-bottom: 2px;
    color: #c6c6c6;
}
.tab span {
    writing-mode: vertical-rl;
    transform: rotate(180deg);
    font-size: 11.3px;
    white-space: nowrap;
}
.t1 { height: 112px; }
.t2 { height: 101px; }
.t3 { height: 116px; margin: 0; }
.dock-space { height: 214px; }
.t4 { height: 95px; }
.t5 { height: 95px; }
.t6 { height: 112px; margin: 0; }

/* Windows */
.window {
    position: absolute;
    top: 0;
    border: 2px solid #646464;
    border-top: 0;
    background: #bfbfc1;
    box-shadow: 0 0 5px 1px #222;
}
.measurements {
    left: 45px;
    width: 660px;
    height: 699px;
}
.expressions {
    left: 706px;
    width: 447px;
    height: 431px;
}
.selector {
    left: 1154px;
    width: 489px;
    height: 852px;
    border-color: #5560a6;
    border-bottom: 0;
    background: #d4d4d6;
}
.titlebar {
    height: 25px;
    background: #646464;
    color: #b6b6b6;
    display: flex;
    align-items: center;
    padding: 0 3px 0 5px;
    font-size: 12px;
}
.selector .titlebar {
    background: #5560a6;
    color: #ededed;
}
.titlebar b {
    flex: 1;
    text-align: center;
    margin-top: -2px;
    padding-left: 2px;
}
.close {
    width: 10px;
    height: 10px;
    color: #d2d2d2;
}
.shade {
    width: 10px;
    height: 8px;
    margin-left: 11px;
    color: #d2d2d2;
}
.selector .close,
.selector .shade {
    color: #fff;
}
.app {
    width: 17px;
    height: 17px;
    margin-top: 2px;
}

/* Measurements */
.measurements .content {
    padding: 8px;
}
.table-tools {
    display: flex;
    padding-top: 7px;
    height: 55px;
}
.sorting {
    width: 334px;
}
.sorting .line {
    height: 20px;
}
.order {
    width: 117px;
    height: 22px;
}
.order .i16 {
    margin-right: 6px;
}
.summary {
    margin-top: 5px;
    line-height: 14px;
}
.actions {
    display: grid;
    grid-template-columns: repeat(3, 24px);
    grid-template-rows: 19px 16px;
    column-gap: 8px;
    row-gap: 6px;
    place-items: center;
}
.tick16 {
    width: 16px;
    height: 13px;
}
.lock16 {
    width: 12px;
    height: 16px;
}
.actions em {
    width: 14px;
    height: 4px;
    background: #b64b36;
}
.table {
    position: relative;
    margin: 0 1px 7px;
    width: 638px;
    height: 156px;
    border: 1px solid #6f6f6f;
    background: #a5a5a5;
}
.tr {
    display: grid;
    grid-template-columns: 50px 38px 38px 276px 74px 121px 25px;
    height: 22px;
    width: 622px;
    overflow: hidden;
    background: #dadada;
}
.tr > div {
    display: flex;
    align-items: center;
    justify-content: center;
    border-right: 1px solid #b0b0b0;
    white-space: nowrap;
    overflow: hidden;
}
.tr:nth-child(even) {
    background: #cdd1dc;
}
.tr.head {
    height: 29px;
    background: linear-gradient(#d0d0d0, #a0a0a0);
    border-bottom: 1px solid #6f6f6f;
}
.tr.head > div {
    border-color: #6f6f6f;
}
.tr > .l {
    justify-content: flex-start;
    padding-left: 5px;
}
.tr.head > .l {
    padding-left: 4px;
}
.tr > .num {
    justify-content: flex-end;
    padding: 0 6px 6px 0;
}
.tr > .file {
    justify-content: flex-start;
    padding-left: 5px;
    gap: 6px;
}
.file span {
    padding-bottom: 6px;
}
.tr > .cut {
    justify-content: flex-start;
    padding-left: 5px;
    border: 0;
}
.tr > .last {
    padding-left: 13px;
}
.l .tick {
    margin-left: 1px;
}
.vscroll,
.lscroll {
    position: absolute;
    right: 0;
    top: 0;
    width: 15px;
    height: 139px;
    display: flex;
    flex-direction: column;
    align-items: center;
    background: #a5a5a5;
}
.vscroll b {
    width: 15px;
    height: 26px;
    border: 2px solid #8d8d8d;
    background: #c1c1c1;
    margin-bottom: auto;
}
.vscroll svg,
.lscroll svg {
    width: 9px;
    height: 5px;
    margin-bottom: 12px;
}
.vscroll svg + svg {
    margin-bottom: 6px;
}
.hscroll {
    position: absolute;
    left: 0;
    bottom: 0;
    width: 636px;
    height: 15px;
    display: flex;
    align-items: center;
    background: #a5a5a5;
}
.hscroll b {
    width: 131px;
    height: 15px;
    border: 2px solid #8d8d8d;
    background: #c1c1c1;
    margin-right: auto;
}
.hscroll svg {
    width: 9px;
    height: 5px;
    margin-right: 8px;
}
.hscroll svg + svg {
    margin-right: 19px;
}
.graph-tools {
    padding: 6px 0 4px;
}
.graph-tools .i16 {
    margin-left: 18px;
}
.chart {
    background: #d9d9d9;
    font-family: "DejaVu Sans", sans-serif;
    font-stretch: normal;
    font-size: 10px;
}
.gl {
    stroke: #000;
    stroke-opacity: .2;
    fill: none;
}
.gl.dark {
    stroke-opacity: .3;
}
.axis {
    fill: none;
    stroke: #666;
}
.series {
    fill: none;
    stroke: #4182c3;
    stroke-width: 2;
    stroke-miterlimit: 20;
}
.steps {
    fill: none;
    stroke: #333;
    stroke-width: 3;
}
.end {
    text-anchor: end;
}
.mid,
.name,
.cap {
    text-anchor: middle;
}
.cap {
    font-weight: bold;
    font-size: 11px;
}
.name {
    font-size: 16px;
}

/* Expressions */
.expressions .content {
    height: 404px;
    padding: 9px 10px 0 9px;
    display: flex;
    flex-direction: column;
    gap: 6px;
    background: linear-gradient(42.5deg, #bbbbbd 122px, #c1c1c2 122px);
}
.expr {
    display: flex;
    height: 190px;
}
.tick14 {
    width: 14px;
    height: 11px;
    margin-top: 2px;
}
.expr label {
    width: 64px;
    text-align: right;
    margin-right: 5px;
    line-height: 15px;
}
.code {
    width: 318px;
    border: 1px solid #6f6f6f;
    background: #dadada;
    padding: 4px 1px 0 4px;
    font: 13px/16px "DejaVu Sans Mono", monospace;
    white-space: pre;
}
.code p {
    margin: 0;
    height: 16px;
}
.code q {
    quotes: none;
    color: #c41e43;
}
.code .cur {
    background: #c7ced8;
}
.play {
    width: 15px;
    height: 14px;
    align-self: center;
    margin-left: 8px;
}

/* SubframeSelector */
.selector .content {
    padding: 8px;
    display: flex;
    flex-direction: column;
    gap: 6px;
    height: 804px;
}
.selector .section {
    background: #bab7ae;
    color: #0a5ab4;
}
.selector .combo {
    background: linear-gradient(#e4e4e4, #bdbdbd);
    border-color: #777;
}
.row {
    display: flex;
    align-items: center;
    height: 20px;
    white-space: nowrap;
}
.row > label {
    width: 125px;
    text-align: right;
    margin-right: 4px;
}
.row > label + div + span {
    margin-left: 4px;
}
.row > span.fx {
    margin: -6px 19px 0 139px;
    font: italic 14px "DejaVu Serif", serif;
    font-stretch: condensed;
    letter-spacing: -1px;
    color: #333;
}
.subframes {
    display: flex;
    gap: 4px;
    height: 325px;
}
.list {
    position: relative;
    width: 344px;
    border: 2px solid #84a9ee;
    background: #f1f1f1;
    overflow: hidden;
}
.item {
    display: flex;
    height: 19px;
    line-height: 17px;
    background: #f1f1f1;
}
.item:nth-child(even) {
    background: #e3e7f1;
}
.item > div {
    width: 26px;
    border-right: 1px solid #c9c9c9;
    text-align: right;
    padding-right: 6px;
}
.item > .t {
    width: 25px;
    padding: 4px 0 0 6px;
}
.item > .n {
    width: auto;
    border: 0;
    padding-left: 5px;
}
.lscroll {
    height: 321px;
    background: #b7b7b7;
}
.lscroll b {
    width: 15px;
    height: 229px;
    border: 2px solid #979797;
    background: #d2d2d4;
    margin-bottom: auto;
}
.lscroll svg + svg {
    margin-bottom: 6px;
}
.buttons {
    width: 121px;
    display: flex;
    flex-direction: column;
}
button {
    height: 21px;
    flex: none;
    margin: 0 0 4px;
    padding: 0;
    border: 1px solid #777;
    background: linear-gradient(#e4e4e4, #bdbdbd);
    font: inherit;
    color: #111;
}
button:disabled {
    background: #c8c8c8;
    color: #8a8a8a;
}
.check {
    display: flex;
    align-items: center;
    gap: 6px;
    height: 13px;
    margin-bottom: 5px;
    white-space: nowrap;
}
.check i {
    width: 13px;
    height: 13px;
    border: 1px solid #777;
    background: #f4f4f4;
}
.form {
    display: flex;
    flex-direction: column;
    gap: 4px;
}
.edit {
    height: 20px;
    border: 1px solid #777;
    background: #f3f3f3;
    padding-left: 5px;
    line-height: 18px;
}
.spin {
    width: 47px;
    display: flex;
    justify-content: space-between;
}
.spin i {
    width: 14px;
    display: flex;
    flex-direction: column;
    align-items: center;
    justify-content: space-evenly;
    background: linear-gradient(#ddd, #bbb);
}
.spin svg {
    width: 7px;
    height: 4px;
}
.folder {
    width: 10px;
    height: 10px;
    margin-left: 9px;
}
.row > .postfix {
    width: 53px;
}
.row.overwrite {
    height: 14px;
}
.overwrite .check {
    margin: 0;
}
.control {
    display: flex;
    align-items: center;
    gap: 14px;
    height: 23px;
    padding: 2px 8px 0 9px;
    background: #bab7ae;
    border-bottom: 3px solid #c4c2bb;
    color: #0a5ab4;
}
.control svg {
    width: 11px;
    height: 11px;
}
.control svg.c12 {
    width: 13px;
    height: 13px;
    margin: 0 0 0 -2px;
}
.control span {
    flex: 1;
}
```
